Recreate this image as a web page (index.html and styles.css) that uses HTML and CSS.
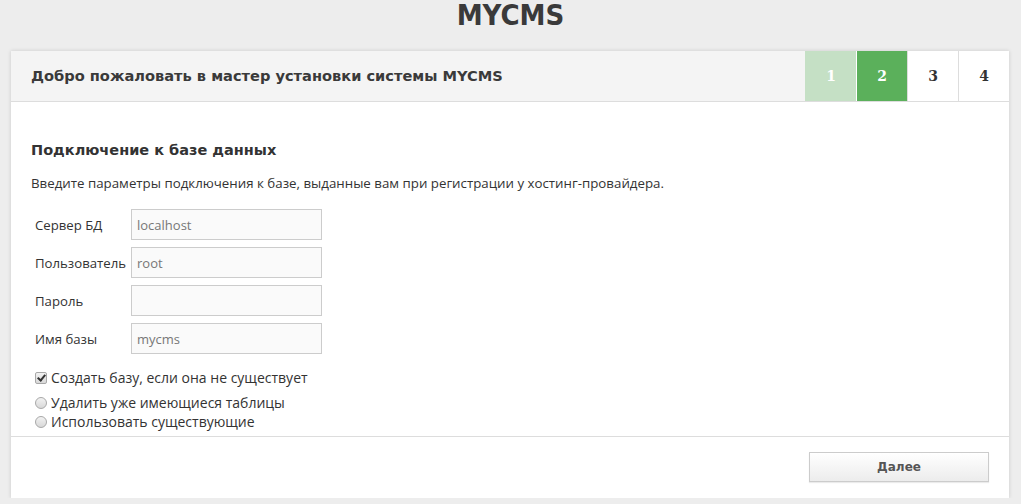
FILE: index.html
```html
<!DOCTYPE html>
<html lang="ru">
<head>
    <meta charset="UTF-8">
    <title>MYCMS — установка</title>
    <link rel="stylesheet" href="styles.css">
</head>
<body>
    <h1 class="logo">MYCMS</h1>

    <div class="wizard">
        <div class="wizard-head">
            <div class="wizard-title">Добро пожаловать в мастер установки системы MYCMS</div>
            <ul class="steps">
                <li class="step done">1</li>
                <li class="step active">2</li>
                <li class="step">3</li>
                <li class="step">4</li>
            </ul>
        </div>

        <div class="wizard-body">
            <h2>Подключение к базе данных</h2>
            <p class="hint">Введите параметры подключения к базе, выданные вам при регистрации у хостинг-провайдера.</p>

            <form class="db-form">
                <div class="row">
                    <label for="host">Сервер БД</label>
                    <input type="text" id="host" value="localhost">
                </div>
                <div class="row">
                    <label for="user">Пользователь</label>
                    <input type="text" id="user" value="root">
                </div>
                <div class="row">
                    <label for="pass">Пароль</label>
                    <input type="password" id="pass">
                </div>
                <div class="row">
                    <label for="dbname">Имя базы</label>
                    <input type="text" id="dbname" value="mycms">
                </div>

                <div class="options">
                    <label class="check first"><input type="checkbox" checked> Создать базу, если она не существует</label>
                    <label class="check"><input type="radio" name="tables"> Удалить уже имеющиеся таблицы</label>
                    <label class="check"><input type="radio" name="tables"> Использовать существующие</label>
                </div>
            </form>
        </div>

        <div class="wizard-foot">
            <button type="button" class="btn">Далее</button>
        </div>
    </div>
</body>
</html>
```

FILE: styles.css
```css
body {
    margin: 0;
    background: #ededed;
    font-family: "DejaVu Sans", sans-serif;
    color: #333;
}
.logo {
    margin: 0;
    height: 51px;
    line-height: 30px;
    text-align: center;
    font-family: "DejaVu Sans", sans-serif;
    font-stretch: condensed;
    font-size: 29px;
    font-weight: bold;
    color: #3a3a3a;
}
.wizard {
    margin: 0 12px 0 11px;
    background: #fff;
    box-shadow: 0 0 4px rgba(0, 0, 0, 0.15);
}
.wizard-head {
    display: flex;
    height: 50px;
    background: #f4f4f4;
    border-bottom: 1px solid #ddd;
}
.wizard-title {
    flex: 1;
    padding-left: 20px;
    line-height: 50px;
    font-size: 14.6px;
    font-weight: bold;
    color: #3a3a3a;
}
.steps {
    display: flex;
    margin: 0;
    padding: 0;
    list-style: none;
}
.step {
    width: 50px;
    line-height: 50px;
    text-align: center;
    border-left: 1px solid #ddd;
    background: #fff;
    font-family: "DejaVu Serif", serif;
    font-weight: bold;
    font-size: 14px;
    color: #333;
}
.step.done {
    background: #c5e0c5;
    border-left-color: #c5e0c5;
    color: #fff;
}
.step.active {
    background: #5bb05b;
    border-left-color: #fff;
    color: #fff;
}
.wizard-body {
    padding: 40px 20px 5px;
    border-bottom: 1px solid #ddd;
}
h2 {
    margin: 0 0 16px;
    font-size: 14.5px;
    font-weight: bold;
    color: #333;
}
.hint {
    margin: 0 0 17px;
    font-family: "Open Sans", sans-serif;
    font-size: 13.3px;
}
.row {
    display: flex;
    align-items: center;
    margin-bottom: 7px;
}
.row label {
    width: 96px;
    padding-left: 4px;
    font-family: "Open Sans", sans-serif;
    font-size: 13.2px;
}
.row input {
    box-sizing: border-box;
    width: 191px;
    height: 31px;
    margin: 0;
    padding: 0 5px;
    border: 1px solid #ccc;
    background: #fafafa;
    font-family: "Open Sans", sans-serif;
    font-size: 13px;
    color: #777;
}
.options {
    padding-top: 7px;
}
.check {
    display: flex;
    align-items: center;
    padding-left: 4px;
    height: 19px;
    font-family: "Open Sans", sans-serif;
    font-size: 14px;
}
.check.first {
    margin-bottom: 6px;
}
.check input {
    appearance: none;
    box-sizing: border-box;
    position: relative;
    width: 12px;
    height: 12px;
    margin: 0 4px 0 0;
    border: 1px solid #a8a8a8;
    background: linear-gradient(#f2f2f2, #d8d8d8);
}
.check input[type="checkbox"] {
    border-radius: 2px;
}
.check input[type="checkbox"]:checked::after {
    content: "";
    position: absolute;
    left: 3px;
    top: 0;
    width: 3px;
    height: 6px;
    border: solid #333;
    border-width: 0 2px 2px 0;
    transform: rotate(40deg);
}
.check input[type="radio"] {
    border-radius: 50%;
}
.wizard-foot {
    display: flex;
    justify-content: flex-end;
    padding: 15px 20px 16px;
}
.btn {
    width: 180px;
    height: 30px;
    border: 1px solid #ccc;
    background: linear-gradient(#fff, #ececec);
    box-shadow: 0 1px 1px rgba(0, 0, 0, 0.08);
    font-family: "DejaVu Sans", sans-serif;
    font-size: 12px;
    font-weight: bold;
    color: #555;
    cursor: pointer;
}
```
